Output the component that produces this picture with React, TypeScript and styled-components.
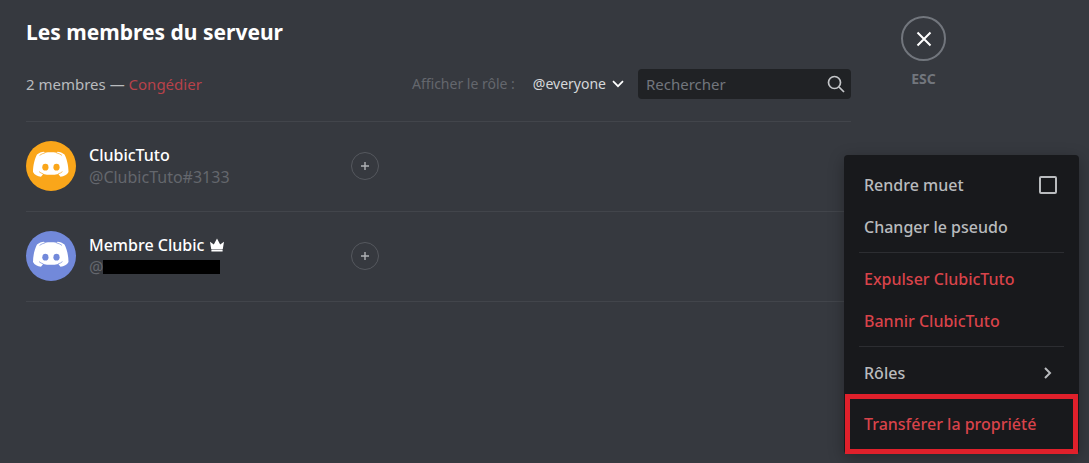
import React from "react";
import styled, { createGlobalStyle } from "styled-components";

const GlobalStyle = createGlobalStyle`
  * { box-sizing: border-box; }
  body {
    margin: 0;
    background: #36393f;
    font-family: "Noto Sans", "Open Sans", sans-serif;
    font-size: 16px;
    line-height: 22px;
    color: #b9bbbe;
  }
  button, input, select { font: inherit; color: inherit; }
`;

const Page = styled.div`
  position: relative;
  display: flex;
  align-items: flex-start;
  gap: 50px;
  min-height: 100vh;
  padding: 16px 143px 8px 26px;
`;

const Content = styled.main`
  flex: 1;
  min-width: 0;
`;

const Title = styled.h1`
  margin: 0 0 21px;
  font-size: 21px;
  line-height: 32px;
  font-weight: 700;
  color: #fff;
`;

const Toolbar = styled.div`
  display: flex;
  align-items: center;
  height: 30px;
  margin-bottom: 22px;
`;

const Count = styled.div`
  flex: 1;
  font-size: 15px;
`;

const PruneButton = styled.button`
  padding: 0;
  border: 0;
  background: none;
  color: #b8424a;
  cursor: pointer;
`;

const RoleLabel = styled.label`
  font-size: 14px;
  color: #64676d;
`;

const RoleField = styled.div`
  display: flex;
  align-items: center;
  gap: 6px;
  margin: 0 14px 0 18px;
  font-size: 14px;
  color: #d5d7da;
`;

const RoleSelect = styled.select`
  appearance: none;
  field-sizing: content;
  padding: 0;
  border: 0;
  background: none;
  cursor: pointer;
`;

const SearchBox = styled.div`
  display: flex;
  align-items: center;
  width: 213px;
  height: 30px;
  padding: 0 6px 0 8px;
  border-radius: 4px;
  background: #202225;
`;

const SearchInput = styled.input`
  flex: 1;
  min-width: 0;
  padding: 0;
  border: 0;
  outline: 0;
  background: none;
  font-size: 15px;
  &::placeholder { color: #72767d; opacity: 1; }
`;

const MemberList = styled.ul`
  margin: 0;
  padding: 0;
  list-style: none;
  border-top: 1px solid #42454b;
`;

const MemberRow = styled.li`
  display: grid;
  grid-template-columns: 50px 249px 28px;
  column-gap: 13px;
  align-items: center;
  height: 90px;
  padding-bottom: 1px;
  border-bottom: 1px solid #42454b;
`;

const Avatar = styled.svg<{ $color: string }>`
  width: 50px;
  height: 50px;
  border-radius: 50%;
  background: ${(p) => p.$color};
`;

const MemberName = styled.div`
  display: flex;
  align-items: center;
  gap: 5px;
  font-weight: 500;
  color: #fff;
`;

const MemberTag = styled.div`
  display: flex;
  align-items: center;
  color: #64676d;
`;

const Redacted = styled.span`
  width: 117px;
  height: 14px;
  background: #000;
`;

const AddRoleButton = styled.button`
  display: grid;
  place-items: center;
  width: 28px;
  height: 28px;
  padding: 0;
  border: 1px solid #55585e;
  border-radius: 50%;
  background: none;
  color: #b0b2b6;
  cursor: pointer;
`;

const CloseBlock = styled.div`
  display: flex;
  flex-direction: column;
  align-items: center;
  gap: 7px;
  width: 45px;
  font-size: 14px;
  font-weight: 700;
  color: #72767d;
`;

const CloseButton = styled.button`
  display: grid;
  place-items: center;
  width: 45px;
  height: 45px;
  padding: 0;
  border: 2px solid #72767d;
  border-radius: 50%;
  background: none;
  color: #fff;
  cursor: pointer;
`;

const Menu = styled.div`
  position: absolute;
  top: 155px;
  right: 10px;
  width: 235px;
  padding: 9px 1px 0;
  border-radius: 4px;
  background: #18191c;
  box-shadow: 0 4px 16px rgba(0, 0, 0, 0.3);
`;

const itemColor = (danger?: boolean) => (danger ? "#d8434a" : "#b9bbbe");

const MenuItem = styled.button<{ $danger?: boolean; $marked?: boolean }>`
  display: flex;
  align-items: center;
  justify-content: space-between;
  width: 100%;
  height: ${(p) => (p.$marked ? 60 : 42)}px;
  padding: ${(p) => (p.$marked ? "0 14px" : "0 19px")};
  border: ${(p) => (p.$marked ? "5px solid #e0202b" : "0")};
  background: none;
  font-weight: 500;
  color: ${(p) => itemColor(p.$danger)};
  text-align: left;
  cursor: pointer;
`;

const CheckItem = styled.label`
  display: flex;
  align-items: center;
  justify-content: space-between;
  height: 42px;
  padding: 0 21px 0 19px;
  font-weight: 500;
`;

const Checkbox = styled.input`
  appearance: none;
  width: 18px;
  height: 18px;
  margin: 0;
  border: 2px solid #b9bbbe;
  border-radius: 2px;
`;

const Separator = styled.hr`
  height: 1px;
  margin: 4px 14px 5px;
  border: 0;
  background: #2c2d31;
`;

const DiscordAvatar = ({ color }: { color: string }) => (
  <Avatar $color={color} viewBox="0 0 50 50" aria-hidden="true">
    <path
      fill="#fff"
      d="M7 31C7 24 9 17 11 13.5 13 12 15.5 11 18 10.8L19 11.8C23 11.2 27 11.2 30.5 11.8L31.5 10.8C34 11 36.5 12 38.5 13.5 40.5 17 42.5 24 42.5 31 41 33.8 38 35.5 34.5 35.7L32.3 32.9C27.5 34.1 22 34.1 17.2 32.9L15 35.7C11.5 35.5 8.5 33.8 7 31Z"
    />
    <g fill="none" stroke={color} strokeWidth="0.7">
      <path d="M13.5 14.4C15.2 13.2 17 12.3 19.2 11.8M36 14.4C34.3 13.2 32.5 12.3 30.3 11.8" />
      <path d="M13 30.6C14.2 31.7 15.6 32.4 17.4 32.9M36.5 30.6C35.3 31.7 33.9 32.4 32.1 32.9" />
    </g>
    <g fill={color}>
      <ellipse cx="19.4" cy="26.2" rx="3.1" ry="3.4" />
      <ellipse cx="30.5" cy="26.2" rx="3.1" ry="3.4" />
    </g>
  </Avatar>
);

const Crown = () => (
  <svg width="16" height="16" viewBox="0 0 16 16" fill="#fff" aria-label="Propriétaire">
    <path d="M1 4.8 4.8 7.4 8 1.5l3.2 5.9L15 4.8 13.8 12H2.2zM2.4 12.6h11.2v2H2.4z" />
  </svg>
);

const Plus = () => (
  <svg width="8" height="8" viewBox="0 0 8 8" stroke="currentColor" strokeWidth="1.4" aria-hidden="true">
    <path d="M4 0v8M0 4h8" />
  </svg>
);

const members = [
  { name: "ClubicTuto", tag: "@ClubicTuto#3133", color: "#faa61a", owner: false },
  { name: "Membre Clubic", tag: "@", color: "#7289da", owner: true },
];

export default function App() {
  return (
    <>
      <GlobalStyle />
      <Page>
        <Content>
          <Title>Les membres du serveur</Title>
          <Toolbar>
            <Count>
              2 membres — <PruneButton>Congédier</PruneButton>
            </Count>
            <RoleLabel htmlFor="role">Afficher le rôle :</RoleLabel>
            <RoleField>
              <RoleSelect id="role">
                <option>@everyone</option>
              </RoleSelect>
              <svg width="12" height="8" viewBox="0 0 12 8" fill="none" stroke="#fff" strokeWidth="1.7" aria-hidden="true">
                <path d="M1 1.2 6 6.2l5-5" />
              </svg>
            </RoleField>
            <SearchBox>
              <SearchInput type="text" placeholder="Rechercher" aria-label="Rechercher" />
              <svg width="18" height="18" viewBox="0 0 18 18" fill="none" stroke="#c4c6c9" strokeWidth="1.7" aria-hidden="true">
                <circle cx="7.5" cy="7.5" r="6" />
                <path d="m12 12 5 5" />
              </svg>
            </SearchBox>
          </Toolbar>
          <MemberList>
            {members.map((m) => (
              <MemberRow key={m.name}>
                <DiscordAvatar color={m.color} />
                <div>
                  <MemberName>
                    {m.name}
                    {m.owner && <Crown />}
                  </MemberName>
                  <MemberTag>
                    {m.tag}
                    {m.owner && <Redacted />}
                  </MemberTag>
                </div>
                <AddRoleButton aria-label="Ajouter un rôle">
                  <Plus />
                </AddRoleButton>
              </MemberRow>
            ))}
          </MemberList>
        </Content>
        <CloseBlock>
          <CloseButton aria-label="Fermer">
            <svg width="16" height="16" viewBox="0 0 16 16" fill="none" stroke="currentColor" strokeWidth="2" aria-hidden="true">
              <path d="m1.5 1.5 13 13M14.5 1.5l-13 13" />
            </svg>
          </CloseButton>
          ESC
        </CloseBlock>
        <Menu>
          <CheckItem>
            Rendre muet
            <Checkbox type="checkbox" />
          </CheckItem>
          <MenuItem>Changer le pseudo</MenuItem>
          <Separator />
          <MenuItem $danger>Expulser ClubicTuto</MenuItem>
          <MenuItem $danger>Bannir ClubicTuto</MenuItem>
          <Separator />
          <MenuItem>
            Rôles
            <svg width="22" height="12" viewBox="0 0 22 12" fill="none" stroke="currentColor" strokeWidth="2" aria-hidden="true">
              <path d="m8 1 5 5-5 5" />
            </svg>
          </MenuItem>
          <MenuItem $danger $marked>Transférer la propriété</MenuItem>
        </Menu>
      </Page>
    </>
  );
}
